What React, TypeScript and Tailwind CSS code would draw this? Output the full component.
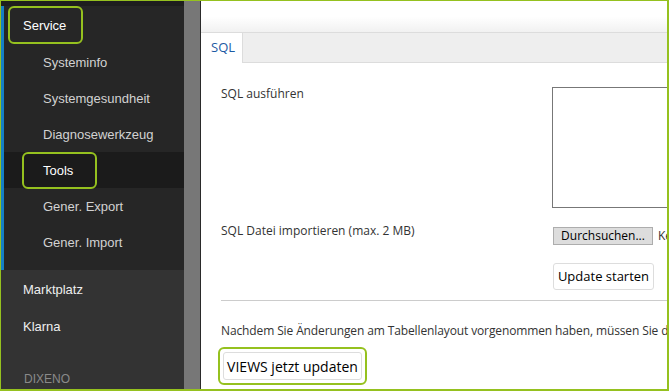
import React from 'react';

const subItems = ['Systeminfo', 'Systemgesundheit', 'Diagnosewerkzeug', 'Tools', 'Gener. Export', 'Gener. Import'];

export default function App() {
    return (
        <div className="flex h-[391px] w-[669px] overflow-hidden border-t border-l border-r-2 border-b-2 border-[#95c11f] bg-white">
            {/* Sidebar */}
            <div className="flex w-[183px] shrink-0 flex-col bg-[#333333] font-['Liberation_Sans',Arial,sans-serif] text-[13px]">
                <div className="h-[5px] bg-[#1e1e1e]" />
                <div className="border-l-[3px] border-[#1580c4] bg-[#262626] pb-[10px]">
                    <div className="ml-[4px] flex h-[38px] w-[75px] items-center rounded-[6px] border-2 border-[#95c11f] pl-[13px] pt-px text-white">
                        Service
                    </div>
                    {subItems.map((item) =>
                        item === 'Tools' ? (
                            <div key={item} className="flex h-[36px] items-center bg-[#1b1b1b]">
                                <div className="ml-[18px] flex h-[37px] w-[75px] items-center rounded-[6px] border-2 border-[#95c11f] pl-[19px] pt-[2px] text-white">
                                    {item}
                                </div>
                            </div>
                        ) : (
                            <div key={item} className="flex h-[36px] items-center pl-[39px] pt-[2px] text-[#d2d2d2]">
                                {item}
                            </div>
                        )
                    )}
                </div>
                <div className="flex h-[37px] items-center pl-[22px] pt-[2px] text-[#eeeeee]">Marktplatz</div>
                <div className="flex h-[37px] items-center pl-[22px] pt-[2px] text-[#eeeeee]">Klarna</div>
                <div className="mt-[26px] pl-[23px] text-[12px] text-[#8a8a8a]">DIXENO</div>
            </div>

            {/* Scroll gutter */}
            <div className="w-[16px] shrink-0 bg-[#777777]" />
            <div className="w-px shrink-0 bg-[#2a2a2a]" />

            {/* Main */}
            <div className="flex min-w-0 flex-1 flex-col overflow-hidden font-['Open_Sans',sans-serif] text-[12px] text-[#333333]">
                <div className="h-[31px] shrink-0 bg-gradient-to-b from-white via-white to-[#f1f1f1]" />
                <div className="flex h-[31px] shrink-0 border-t border-[#dcdcdc] bg-[#eeeeee]">
                    <div className="flex w-[42px] items-center border-r border-[#dcdcdc] bg-white pl-[10px] text-[13px] text-[#1d5aa3]">
                        SQL
                    </div>
                    <div className="flex-1 border-b border-[#dcdcdc]" />
                </div>

                <div className="w-[700px] pl-[20px] pt-[20px]">
                    <div className="grid grid-cols-[331px_1fr]">
                        <div className="pt-[2px]">SQL ausführen</div>
                        <div className="mt-[4px] h-[121px] w-[220px] border border-[#777777] bg-white" />

                        <div className="mt-[14px]">SQL Datei importieren (max. 2 MB)</div>
                        <div className="mt-[19px] flex items-center whitespace-nowrap">
                            <button className="ml-px flex h-[18px] w-[100px] items-center justify-center border border-[#adadad] bg-[#dddddd] text-[12px] text-black">
                                Durchsuchen...
                            </button>
                            <span className="ml-[5px]">Keine Datei ausgewählt.</span>
                        </div>

                        <div />
                        <div className="mt-[18px]">
                            <button className="ml-px flex h-[27px] w-[101px] items-center justify-center rounded-[3px] border border-[#dddddd] bg-white text-[13px] text-black">
                                Update starten
                            </button>
                        </div>
                    </div>

                    <div className="mt-[10px] h-px bg-[#cccccc]" />

                    <div className="mt-[21px] whitespace-nowrap tracking-[-0.12px]">
                        Nachdem Sie Änderungen am Tabellenlayout vorgenommen haben, müssen Sie die VIEWS aktualisieren.
                    </div>

                    <div className="-ml-[3px] mt-[7px] inline-flex rounded-[6px] border-2 border-[#95c11f] p-[3px]">
                        <button className="flex h-[28px] w-[139px] items-center justify-center rounded-[3px] border border-[#dddddd] bg-white text-[14px] text-black">
                            VIEWS jetzt updaten
                        </button>
                    </div>
                </div>
            </div>
        </div>
    );
}
